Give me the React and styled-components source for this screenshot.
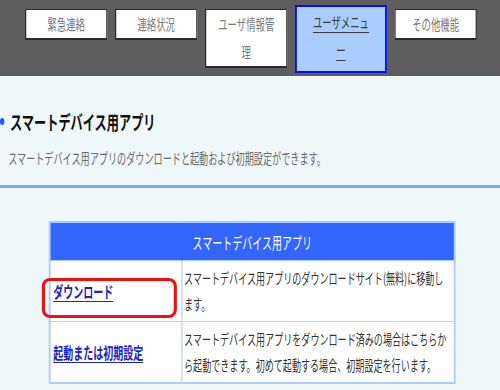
import React from "react";
import styled, { createGlobalStyle } from "styled-components";

const GlobalStyle = createGlobalStyle`
  html, body {
    margin: 0;
    padding: 0;
    overflow: hidden;
    background: #eef8f9;
  }
`;

const Stage = styled.div`
  width: 800px;
  transform: scaleX(0.625);
  transform-origin: 0 0;
  font-family: "Noto Sans CJK JP", "Noto Sans", sans-serif;
  background: #eef8f9;
  min-height: 390px;
`;

const TopBar = styled.nav`
  box-sizing: border-box;
  height: 76px;
  background: #5e5e5e;
  display: flex;
  align-items: flex-start;
  gap: 12px;
  padding: 9px 0 0 40px;
`;

const Tab = styled.div`
  box-sizing: border-box;
  width: ${(p) => (p.$active ? 147 : 132)}px;
  margin-top: ${(p) => (p.$active ? -4 : 0)}px;
  background: ${(p) => (p.$active ? "#aaccff" : "#ffffff")};
  border-style: solid;
  border-color: ${(p) => (p.$active ? "#0a0af0" : "#2a2a2a")};
  border-width: ${(p) => (p.$active ? "2px 3px 2px 3px" : "1px 2px 2px 2px")};
  padding: ${(p) => (p.$active ? "1px 20px 7px" : "0 14px")};
  text-align: center;
  font-size: 15px;
  line-height: 28px;
  color: ${(p) => (p.$active ? "#3a3a3a" : "#7a7a7a")};
  text-decoration: ${(p) => (p.$active ? "underline" : "none")};
  text-underline-offset: 4px;
  line-break: anywhere;
`;

const Main = styled.main`
  padding-top: 31px;
`;

const Heading = styled.h2`
  margin: 0;
  height: 28px;
  display: flex;
  align-items: center;
  gap: 9px;
  font-size: 19.5px;
  font-weight: 700;
  color: #111;
`;

const Bullet = styled.span`
  width: 7px;
  height: 7px;
  border-radius: 50%;
  background: #2255ff;
  flex: none;
`;

const Desc = styled.p`
  margin: 13px 0 0 13px;
  font-size: 14.6px;
  line-height: 20px;
  color: #6a6a6a;
`;

const Rule = styled.hr`
  margin: 17px 0 0;
  border: none;
  height: 3px;
  background: #7aa6f2;
`;

const Table = styled.table`
  margin: 33px 0 0 78px;
  width: 648px;
  table-layout: fixed;
  border-collapse: collapse;
  border: solid #aaccff;
  border-width: 2px 3px;
  background: #fff;
`;

const Col = styled.col`
  width: ${(p) => p.$w}px;
`;

const HeadCell = styled.th`
  height: 37px;
  padding: 0;
  background: #3366ff;
  color: #fff;
  font-size: 16px;
  font-weight: 400;
  border: solid #aaccff;
  border-width: 1px 2px;
`;

const Cell = styled.td`
  position: relative;
  border: solid #b4d2ff;
  border-width: 1px 2px;
  padding: ${(p) => (p.$link ? "0 4px" : "4px 3px 4px 3px")};
  vertical-align: middle;
  font-size: ${(p) => (p.$link ? 16 : 14.5)}px;
  line-height: 26px;
  color: #333;
`;

const Link = styled.a`
  color: #2222cc;
  font-weight: 700;
  text-decoration: underline;
  text-underline-offset: 3px;
`;

const Highlight = styled.span`
  position: absolute;
  left: -14px;
  top: 17px;
  width: 216px;
  height: 40px;
  box-sizing: border-box;
  border: solid #ee1111;
  border-width: 3px 5px;
  border-radius: 13px / 8px;
  pointer-events: none;
`;

const tabs = ["緊急連絡", "連絡状況", "ユーザ情報管理", "ユーザメニュー", "その他機能"];

const rows = [
  {
    link: "ダウンロード",
    text: "スマートデバイス用アプリのダウンロードサイト(無料)に移動します。",
    mark: true,
  },
  {
    link: "起動または初期設定",
    text: "スマートデバイス用アプリをダウンロード済みの場合はこちらから起動できます。初めて起動する場合、初期設定を行います。",
  },
];

export default function App() {
  return (
    <>
      <GlobalStyle />
      <Stage>
        <TopBar>
          {tabs.map((t) => (
            <Tab key={t} $active={t === "ユーザメニュー"}>
              {t}
            </Tab>
          ))}
        </TopBar>
        <Main>
          <Heading>
            <Bullet />
            スマートデバイス用アプリ
          </Heading>
          <Desc>スマートデバイス用アプリのダウンロードと起動および初期設定ができます。</Desc>
          <Rule />
          <Table>
            <colgroup>
              <Col $w={211} />
              <Col $w={437} />
            </colgroup>
            <thead>
              <tr>
                <HeadCell colSpan={2}>スマートデバイス用アプリ</HeadCell>
              </tr>
            </thead>
            <tbody>
              {rows.map((r) => (
                <tr key={r.link}>
                  <Cell $link>
                    <Link href="#">{r.link}</Link>
                    {r.mark && <Highlight />}
                  </Cell>
                  <Cell>{r.text}</Cell>
                </tr>
              ))}
            </tbody>
          </Table>
        </Main>
      </Stage>
    </>
  );
}
